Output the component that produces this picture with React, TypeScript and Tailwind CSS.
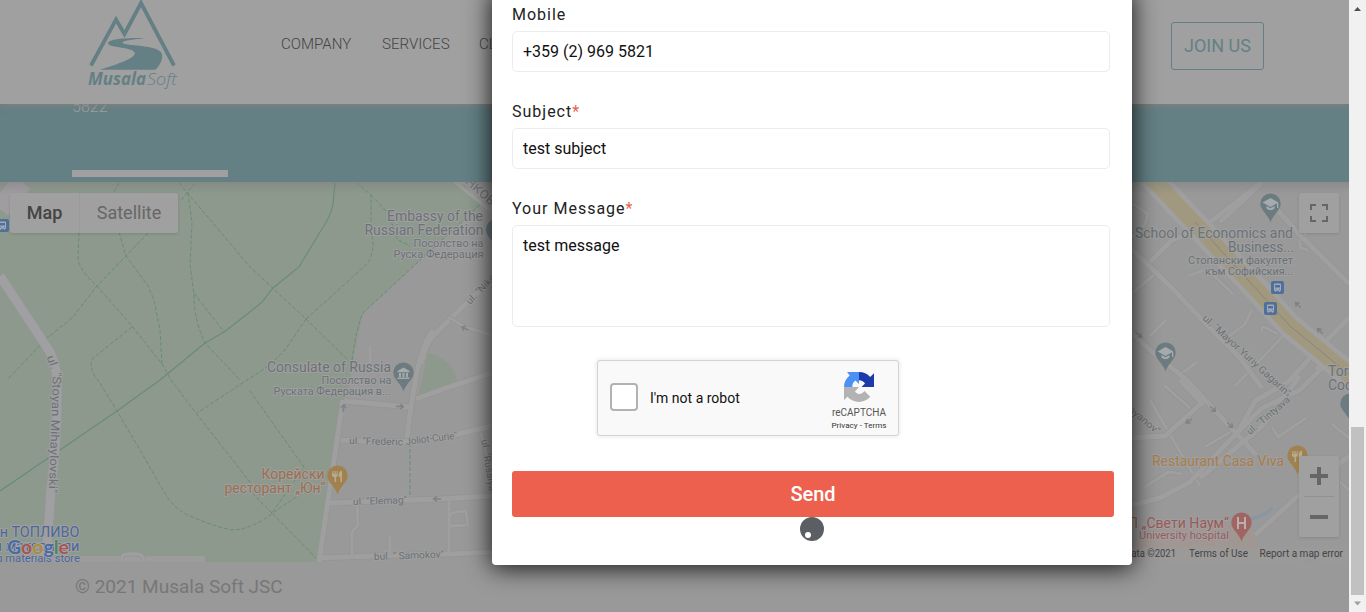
import React from "react";

type LabelProps = {
  x: number;
  y: number;
  size: number;
  fill?: string;
  anchor?: "start" | "middle" | "end";
  length?: number;
  rotate?: number;
  weight?: number;
  children: string;
};

function Label({ x, y, size, fill = "#6b7277", anchor = "start", length, rotate, weight = 400, children }: LabelProps) {
  return (
    <text
      x={x}
      y={y}
      fontSize={size}
      fontWeight={weight}
      fill={fill}
      stroke="#a0a0a0"
      strokeWidth={2}
      strokeLinejoin="round"
      paintOrder="stroke"
      textAnchor={anchor}
      textLength={length}
      lengthAdjust="spacingAndGlyphs"
      transform={rotate === undefined ? undefined : `rotate(${rotate} ${x} ${y})`}
    >
      {children}
    </text>
  );
}

function Pin({ x, y, fill, children }: { x: number; y: number; fill: string; children?: React.ReactNode }) {
  return (
    <g transform={`translate(${x} ${y})`}>
      <path d="M0 18.500 C-1 14-5 10-7.500 6.500 A10.200 10.200 0 1 1 7.500 6.500 C5 10 1 14 0 18.500Z" fill={fill} />
      {children}
    </g>
  );
}

function ForkKnife() {
  return (
    <g fill="#b5aa92">
      <path d="M-5-5h1v3h1v-3h1.200v3h1v-3h1v4a2 2 0 0 1-1.600 2v5h-1.600v-5A2 2 0 0 1-5.500-1z" />
      <path d="M4.500-5.500v11.500h-1.600v-5h-1.600v-3.500q.5-2.500 3.200-3z" />
    </g>
  );
}

function Cap() {
  return (
    <g fill="#a5abad">
      <path d="M0-6 8-1.500 0 3-8-1.500z" />
      <path d="M-4 2v2.500Q0 8 4 4.500V2L0 4.200z" />
      <path d="M6.500-1h1.300v5H6.500z" />
    </g>
  );
}

function Bus({ x, y }: { x: number; y: number }) {
  return (
    <g transform={`translate(${x} ${y})`}>
      <rect width="13" height="13" rx="2" fill="#50709c" />
      <path d="M3 3.500Q3 2.500 4.500 2.500h4q1.500 0 1.500 1v6.200H9v1H7.800v-1H5.200v1H4v-1H3z" fill="#a3abb7" />
      <path d="M4 4h5v2.600H4zM4.200 7.700h1v1h-1zM7.800 7.700h1v1h-1z" fill="#50709c" />
    </g>
  );
}

const Arrow = ({ x, y, r }: { x: number; y: number; r: number }) => (
  <path
    d="M-4 0H3M0-2.500 3.500 0 0 2.500"
    fill="none"
    stroke="#7d8288"
    strokeWidth="1.400"
    transform={`translate(${x} ${y}) rotate(${r})`}
  />
);

/* Streets are stroked twice: a darker casing, then a lighter fill. */
function Streets({ paths, width }: { paths: string[]; width: number }) {
  return (
    <>
      {paths.map((d) => (
        <path key={"c" + d} d={d} stroke="#949495" strokeWidth={width + 1.4} />
      ))}
      {paths.map((d) => (
        <path key={"f" + d} d={d} stroke="#9f9f9f" strokeWidth={width} />
      ))}
    </>
  );
}

const wideLeft = [
  "M343 400 319 562",
  "M433 330Q422 345 417 372L411 406 407 438",
  "M492 282 474 296 450 319 433 336Q425 346 421 364",
  "M344 401 410 407",
  "M416 399 452 386 492 373",
  "M341 440 380 442 420 441 450 436 492 426",
  "M330 503 380 501 440 499 492 496",
  "M317 558 370 556 450 554 492 552",
];
const thinLeft = [
  "M450 318 465 327 492 335",
  "M357 506 358 525 352 532 352 556",
  "M390 536V555",
  "M449 501V552M449 520Q449 513 456 512L466 511 468 525 450 526",
  "M481 433 492 475",
  "M122 562V557Q123 554 129 554H137Q143 554 144 562",
  "M370 368V346",
];
const wideRight = [
  "M1126 244 1170 286 1210 328 1240 358 1262 388",
  "M1126 328 1150 350 1187 380 1208 403 1238 435 1256 455",
  "M1324 366 1300 390 1262 408 1230 440 1190 482 1160 498 1126 507",
  "M1300 376 1262 426 1200 478",
  "M1150 262 1172 240 1200 230 1262 182",
  "M1220 222 1262 183",
  "M1264 195 1300 235 1349 284",
  "M1349 318 1322 345 1288 382 1255 401 1238 432",
  "M1255 535 1300 494 1349 456",
  "M1126 438 1165 436 1204 401",
  "M1349 366 1335 350 1316 370",
  "M1180 380 1204 405",
];
const thinRight = [
  "M1285 334 1262 358 1235 386",
  "M1188 276 1207 269 1233 294",
  "M1130 202 1148 214 1145 224 1126 244",
  "M1252 310 1245 324 1232 334 1226 338",
  "M1262 332Q1260 326 1266 328L1278 334",
  "M1308 250 1300 248V240L1325 212",
  "M1164 385 1192 410M1150 400 1200 486",
  "M1145 487 1168 472 1182 474",
  "M1205 447 1230 432",
  "M1272 427 1278 437 1306 418",
  "M1332 424 1349 438",
  "M1340 482 1349 490",
  "M1126 298 1160 270",
  "M1150 336 1166 320",
  "M1178 376 1197 362",
];

const trails = [
  "M119 183 113 194",
  "M79 232 78 258Q79 270 97 286L132 326 162 364 171 380 196 413 260 495",
  "M119 232 126 256 148 286 154 300 160 330 162 364",
  "M148 233 97 286 72 318 47 338 7 380",
  "M195 183 180 202M179 183 250 267 306 319 350 362",
  "M188 193 192 223 190 264 194 295Q194 320 205 343L240 380",
  "M194 293 224 332",
  "M132 327 92 359Q89 370 98 380L117 411 140 450 164 492Q175 510 190 516 220 529 235 530 255 528 277 510L305 491",
  "M306 319 285 350Q265 370 250 378L197 413",
  "M306 319 335 293 368 263Q376 248 371 233V195L357 183M371 195 388 213 398 240 410 246",
  "M480 205 417 263 363 313Q357 325 352 360",
  "M250 391 304 467 272 513 316 558",
  "M272 513 250 491",
  "M410 443V499",
];

function CityMap() {
  return (
    <svg viewBox="0 182 1349 380" className="block h-[380px] w-[1349px] font-['Roboto',sans-serif]" fill="none">
      <path d="M0 182H1349V562H0z" fill="#999999" />
      <path d="M0 182H462L480 205 417 263 363 313 355 350 350 380 343 405 318 562H205V556H70L0 562z" fill="#8d998d" />
      <path d="M428 353Q452 358 458 383L418 397z" fill="#8d998d" />
      <path d="M455 382 468 376V381L457 386z" fill="#8d998d" />
      <path d="M1126 550 1150 530 1250 522 1265 562H1126z" fill="#a09692" />
      <path d="M455 182H474L492 199V212z" stroke="#a1a1a1" strokeWidth="3" />

      <g stroke="#688b78" strokeWidth="1" strokeDasharray="4 2">
        {trails.map((d) => (
          <path key={d} d={d} />
        ))}
      </g>
      <path
        d="M335 183 333 205Q330 218 320 232L299 267 273 288 262 302Q253 310 224 332L205 343 160 380 117 411 0 491"
        stroke="#688b78"
        strokeWidth="1.100"
      />

      <path d="M22 182 0 209" stroke="#a09da0" strokeWidth="21" />
      <path d="M0 276 46 346Q55 358 57 378 58 430 51 490L46 562" stroke="#959499" strokeWidth="10.500" />
      <path d="M0 276 46 346Q55 358 57 378 58 430 51 490L46 562" stroke="#a09fa1" strokeWidth="9" />
      <path d="M62 559H205" stroke="#9c9d9c" strokeWidth="5" />
      <Streets paths={wideLeft} width={5} />
      <Streets paths={thinLeft} width={3} />
      <Streets paths={thinRight} width={3} />
      <Streets paths={wideRight} width={5} />

      <path d="M1150 176 1248 280 1290 326 1352 377" stroke="#a0a0a0" strokeWidth="25" />
      <path d="M1150 176 1248 280 1290 326 1352 377" stroke="#a0997f" strokeWidth="16" />
      <path d="M1195 222 1248 280 1290 326 1352 377" stroke="#8b8574" strokeWidth="1" />
      <path d="M1240 521Q1264 518 1272 508" stroke="#8796a2" strokeWidth="3" />
      <path d="M1302 562Q1311 553 1320 562z" fill="#8b9095" />

      <Arrow x={400} y={406.500} r={4} />
      <Arrow x={343.500} y={408} r={-82} />
      <Arrow x={465} y={328.500} r={205} />
      <Arrow x={437} y={499} r={180} />
      <Arrow x={1139} y={335} r={40} />
      <Arrow x={1298} y={305} r={225} />
      <Arrow x={1320} y={331} r={225} />
      <Arrow x={1213} y={409} r={45} />
      <Arrow x={1230} y={425} r={45} />
      <Arrow x={1189} y={421} r={145} />

      <Bus x={-4} y={219} />
      <Bus x={1271} y={281} />
      <Bus x={1264} y={302} />

      <Pin x={403.500} y={373} fill="#6b7b80">
        <path d="M-6-2 0-5.500 6-2v1.200H-6zM-4.500 0h2v4h-2zM-1 0h2v4h-2zM2.500 0h2v4h-2zM-6 4.500H6V6H-6z" fill="#a5abad" />
      </Pin>
      <Pin x={496} y={230} fill="#6b7b80" />
      <Pin x={337.500} y={476} fill="#a1824f">
        <ForkKnife />
      </Pin>
      <Pin x={1270.500} y={204} fill="#6b7b80">
        <Cap />
      </Pin>
      <Pin x={1165.500} y={353} fill="#6b7b80">
        <Cap />
      </Pin>
      <Pin x={1350.500} y={404} fill="#6b7b80" />
      <Pin x={1297.500} y={456} fill="#a1824f">
        <ForkKnife />
      </Pin>
      <Pin x={1241.500} y={523} fill="#a06462">
        <path d="M-4.500-6h2v5h5v-5h2V6h-2V1h-5V6h-2z" fill="#bcaead" />
      </Pin>

      <Label x={483} y={221} size={14} anchor="end" length={96}>Embassy of the</Label>
      <Label x={483.500} y={235} size={14} anchor="end" length={119}>Russian Federation</Label>
      <Label x={483.500} y={247} size={11} anchor="end" length={70}>Посолство на</Label>
      <Label x={483.500} y={258} size={11} anchor="end" length={90}>Руска Федерация</Label>
      <Label x={391} y={372} size={14} anchor="end" length={124}>Consulate of Russia</Label>
      <Label x={391.500} y={384} size={11} anchor="end" length={70}>Посолство на</Label>
      <Label x={390.500} y={395} size={11} anchor="end" length={117}>Руската Федерация в...</Label>
      <Label x={324.500} y={479} size={14} anchor="end" length={63} fill="#9c6f4c">Корейски</Label>
      <Label x={325.500} y={493} size={14} anchor="end" length={101} fill="#9c6f4c">ресторант „Юн“</Label>
      <Label x={349} y={444} size={10} length={54} rotate={1.5}>ul. "Frederic</Label>
      <Label x={406} y={445} size={10} length={52} rotate={-7}>Joliot-Curie"</Label>
      <Label x={353} y={505} size={10} length={54} rotate={-2}>ul. "Elemag"</Label>
      <Label x={374} y={560} size={10} length={70} rotate={-2}>bul. " Samokov"</Label>
      <Label x={470} y={305} size={10} length={46} rotate={-46}>ul. "Nikola</Label>
      <Label x={481} y={440} size={10} length={52} rotate={81}>ul. "Rusalya</Label>
      <Label x={459} y={178} size={12} length={50} rotate={41}>аНКОВ "</Label>
      <Label x={46.500} y={357} size={11.500} length={14} rotate={70}>ul.</Label>
      <Label x={53} y={372} size={12} length={121} rotate={92}>"Stoyan Mihaylovski"</Label>

      <Label x={79.500} y={537} size={14} anchor="end" length={88} fill="#4d679b">ин ТОПЛИВО</Label>
      <Label x={79.500} y={551} size={14} anchor="end" length={86} fill="#4d679b">и материали</Label>
      <Label x={80} y={561.500} size={10.500} anchor="end" length={90} fill="#4d679b">ng materials store</Label>
      <text x="7" y="553.500" fontFamily="Lato, sans-serif" fontWeight="700" fontSize="19" stroke="#a8a8a8" strokeWidth="1.600" paintOrder="stroke" textLength="62" lengthAdjust="spacingAndGlyphs">
        <tspan fill="#4a6ba3">G</tspan><tspan fill="#a85551">o</tspan><tspan fill="#ab8c3f">o</tspan><tspan fill="#4a6ba3">g</tspan><tspan fill="#4c8561">l</tspan><tspan fill="#a85551">e</tspan>
      </text>

      <Label x={1293} y={238} size={14} anchor="end" length={158}>School of Economics and</Label>
      <Label x={1294} y={252} size={14} anchor="end" length={66}>Business...</Label>
      <Label x={1293} y={263.500} size={11} anchor="end" length={105}>Стопански факултет</Label>
      <Label x={1293} y={274.500} size={11} anchor="end" length={88}>към Софийския...</Label>
      <Label x={1202} y={319} size={10} length={115} rotate={42.5}>ul. "Mayor Yuriy Gagarin"</Label>
      <Label x={1250} y={435} size={10} length={56} rotate={-40}>ul. "Tintyava"</Label>
      <Label x={1120} y={404} size={10} length={48} rotate={40}>Stoyanov"</Label>
      <Label x={1328} y={376} size={14}>Tor</Label>
      <Label x={1328} y={390} size={14}>Coc</Label>
      <Label x={1284} y={466} size={14} anchor="end" length={132} fill="#a77c4b">Restaurant Casa Viva</Label>
      <Label x={1229} y={528} size={14} anchor="end" length={101} fill="#9b5957">П „Свети Наум“</Label>
      <Label x={1229} y={539} size={11.5} anchor="end" length={90} fill="#9b5957">University hospital</Label>

      <path d="M1132 547H1349V562H1132z" fill="#9b9b9b" fillOpacity=".75" />
      <g fontSize="10" fill="#444">
        <text x="1176" y="557" textAnchor="end" textLength="71" lengthAdjust="spacingAndGlyphs">Map data ©2021</text>
        <text x="1189" y="557" textLength="59" lengthAdjust="spacingAndGlyphs">Terms of Use</text>
        <text x="1259.500" y="557" textLength="83.500" lengthAdjust="spacingAndGlyphs">Report a map error</text>
      </g>
    </svg>
  );
}

function Logo() {
  return (
    <svg viewBox="84 0 100 92" className="h-[92px] w-[100px]" fill="none">
      <path d="M91 65.500 116 19.500 124.500 34 141 3 174 65.500" stroke="#648085" strokeWidth="3.800" />
      <path
        d="M144 38.200C132 37.700 108 38.500 108 43.300 108 48 135 47 134.800 53.500 134.500 59 112 66 99.500 69.800H155.500C161 64 163 59 162 54 159 44 123 46.500 122.500 42.500 123 40 136 39.500 144 38.200Z"
        fill="#648085"
      />
      <g fill="#648085" fontFamily="'Open Sans', sans-serif" fontStyle="italic" fontSize="17">
        <text x="88" y="85" fontWeight="700" textLength="58" lengthAdjust="spacingAndGlyphs">Musala</text>
        <text x="147" y="85" fontWeight="300" textLength="30" lengthAdjust="spacingAndGlyphs">Soft</text>
      </g>
    </svg>
  );
}

function RecaptchaLogo() {
  return (
    <svg viewBox="0 0 64 64" className="h-8 w-8">
      <path fill="#1c3aa9" d="M62 31.900V4.400l-7.600 7.600A30 30 0 0 0 32 2v16.500c6 0 9.500 3 12 6.300L37 32z" />
      <path fill="#4a90f5" d="M32 2H8l5.500 7A30 30 0 0 0 2 32h16.500c0-7 3-11 6.500-13l7 7z" />
      <path fill="#b3b3b3" d="M2 32v26l7-6.500A30 30 0 0 0 54.500 51.500L43 40c-6 8-15 7-19 1l8-9z" />
    </svg>
  );
}

function Field({ label, required, children }: { label: string; required?: boolean; children: React.ReactNode }) {
  return (
    <div className="mb-[29px] flex flex-col">
      <span className="mb-1.5 h-[21px] text-base leading-[21px] tracking-[1px] text-[#222]">
        {label}
        {required && <span className="text-[#ed604d]">*</span>}
      </span>
      {children}
    </div>
  );
}

function ContactDialog() {
  return (
    <div className="absolute left-[492px] top-[-10px] z-20 h-[575px] w-[640px] rounded bg-white pl-5 pt-[14px] shadow-[0_2px_25px_1px_rgba(0,0,0,0.85)]">
      <Field label="Mobile">
        <div className="h-[41px] w-[598px] rounded-[5px] border border-[#ececec] px-2.5 leading-[39px] text-[#111]">+359 (2) 969 5821</div>
      </Field>
      <Field label="Subject" required>
        <div className="h-[41px] w-[598px] rounded-[5px] border border-[#ececec] px-2.5 leading-[39px] text-[#111]">test subject</div>
      </Field>
      <Field label="Your Message" required>
        <div className="h-[102px] w-[598px] rounded-[5px] border border-[#ececec] px-2.5 leading-[39px] text-[#111]">test message</div>
      </Field>
      <div className="ml-[85px] mt-[33px] flex h-[76px] w-[302px] items-center rounded-[3px] border border-[#d3d3d3] bg-[#f9f9f9] pl-3 pr-[10px] shadow-[0_0_4px_1px_rgba(0,0,0,0.08)]">
        <div className="mb-0.5 h-7 w-7 rounded-sm border-2 border-[#b2b2b2] bg-white" />
        <span className="ml-3 grow text-sm text-[#111]">I'm not a robot</span>
        <div className="flex w-[58px] flex-col items-center pt-[5px]">
          <RecaptchaLogo />
          <span className="mt-0.5 text-[10px] leading-[15px] text-[#555]">reCAPTCHA</span>
          <span className="whitespace-nowrap text-[8px] leading-[11px] tracking-[0.05px] text-[#333]">Privacy - Terms</span>
        </div>
      </div>
      <button className="mt-[35px] block h-[46px] w-[602px] rounded-[3px] bg-[#ed604d] text-xl font-medium text-white">Send</button>
      <div className="ml-72 flex h-6 w-6 items-end rounded-full bg-[#5b5f63] pb-[3px] pl-[5px]">
        <div className="h-1.5 w-1.5 rounded-full bg-white" />
      </div>
    </div>
  );
}

function Scrollbar() {
  return (
    <div className="relative z-10 flex h-full w-[17px] flex-col items-center bg-[#f1f1f1]">
      <svg viewBox="0 0 17 17" className="h-[17px] w-[17px]"><path d="M5 11 8.500 7 12 11z" fill="#505050" /></svg>
      <div className="h-[410px]" />
      <div className="h-[168px] w-[13px] bg-[#c1c1c1]" />
      <svg viewBox="0 0 17 17" className="h-[17px] w-[17px]"><path d="M5 6.500 8.500 10.500 12 6.500z" fill="#a0a0a0" /></svg>
    </div>
  );
}

export default function App() {
  return (
    <div className="relative flex h-[612px] w-[1366px] overflow-hidden bg-[#999] font-['Roboto',sans-serif]">
      <div className="flex w-[1349px] flex-col">
        <header className="relative z-10 flex h-[104px] bg-[#a0a0a0] pl-[84px] shadow-[0_2px_6px_rgba(130,130,125,0.8)]">
          <Logo />
          <nav className="ml-[97px] mt-8 flex gap-[30px] text-[15.1px] font-light leading-6 text-[#444]">
            <span className="w-[71px]">COMPANY</span>
            <span className="w-[67px]">SERVICES</span>
            <span>CL</span>
          </nav>
          <div className="ml-auto mr-[85px] mt-[22px] h-12 w-[93px] rounded-[3px] border border-[#648085] text-center text-lg leading-[46px] text-[#648085]">
            JOIN US
          </div>
        </header>
        <section className="flex h-[78px] flex-col bg-[#648085] pl-[72px]">
          <span className="-mt-[7px] h-5 text-base font-light leading-5 text-[#a0a0a0]">5822</span>
          <div className="mt-[53px] h-[7px] w-[156px] bg-[#a0a0a0]" />
        </section>
        <section className="relative h-[380px] shrink-0">
          <CityMap />
          <div className="absolute inset-x-0 top-0 h-3 bg-linear-to-b from-[#777]/40 to-transparent" />
          <div className="absolute left-2.5 top-[11px] flex h-10 w-[168px] rounded-xs bg-[#a0a0a0] text-lg leading-10 shadow-[0_1px_3px_rgba(0,0,0,0.12)]">
            <div className="w-[70px] border-r border-[#999] text-center font-medium text-[#444]">Map</div>
            <div className="grow text-center text-[#666]">Satellite</div>
          </div>
          <div className="absolute left-[1299px] top-[11px] flex h-10 w-10 items-center justify-center rounded-xs bg-[#a0a0a0] shadow-[0_1px_3px_rgba(0,0,0,0.12)]">
            <svg viewBox="0 0 18 18" className="h-[18px] w-[18px]"><path d="M0 0h6v2H2v4H0zM12 0h6v6h-2V2h-4zM0 12h2v4h4v2H0zM16 12h2v6h-6v-2h4z" fill="#666" /></svg>
          </div>
          <div className="absolute left-[1299px] top-[274px] flex h-[81px] w-10 flex-col items-center rounded-xs bg-[#a0a0a0] shadow-[0_1px_3px_rgba(0,0,0,0.12)]">
            <svg viewBox="0 0 40 40" className="h-10 w-10"><path d="M11 18h7v-7h4v7h7v4h-7v7h-4v-7h-7z" fill="#666" /></svg>
            <div className="h-px w-[30px] bg-[#909090]" />
            <svg viewBox="0 0 40 40" className="h-10 w-10"><path d="M11 18h18v4H11z" fill="#666" /></svg>
          </div>
        </section>
        <footer className="-mt-px h-[51px] border-t border-[#8f8f8f] bg-[#999] pl-[75px] text-[19px] leading-[50px] text-[#777]">
          © 2021 Musala Soft JSC
        </footer>
      </div>
      <ContactDialog />
      <Scrollbar />
    </div>
  );
}
